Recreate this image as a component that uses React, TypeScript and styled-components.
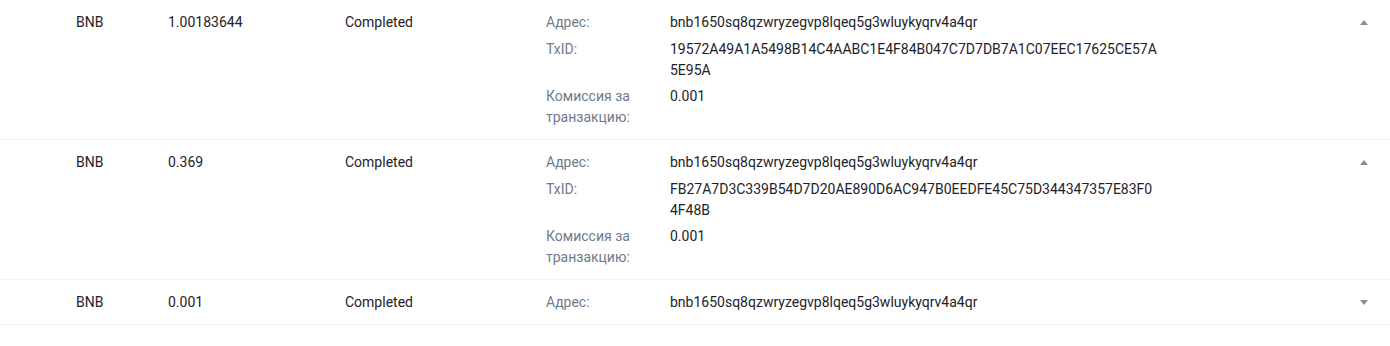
import React from "react";
import styled, { createGlobalStyle } from "styled-components";

const GlobalStyle = createGlobalStyle`
  body {
    margin: 0;
    background: #ffffff;
    font-family: Roboto, "Liberation Sans", Arial, sans-serif;
    font-size: 14px;
    color: #1e2329;
  }
`;

const Table = styled.div`
  display: flex;
  flex-direction: column;
  width: 100%;
`;

const Row = styled.div`
  display: flex;
  align-items: flex-start;
  padding: 12px 0 11px 76px;
  border-bottom: 1px solid #eef0f2;
  line-height: 21px;
`;

const Cell = styled.div<{ $w: number }>`
  flex: 0 0 ${(p) => p.$w}px;
  width: ${(p) => p.$w}px;
`;

const Details = styled.div`
  display: flex;
  flex-direction: column;
  gap: 5.5px;
  flex: 1;
`;

const DetailLine = styled.div`
  display: flex;
`;

const Label = styled.div`
  flex: 0 0 124px;
  width: 124px;
  padding-right: 16px;
  box-sizing: border-box;
  color: #707a8a;
`;

const Value = styled.div`
  width: 487px;
  word-break: break-all;
  color: #1e2329;
`;

const Toggle = styled.div`
  flex: 0 0 52px;
  display: flex;
  justify-content: center;
  padding-top: 8px;
  padding-left: 2px;
`;

const Caret = ({ up }: { up: boolean }) => (
  <svg width="8" height="5" viewBox="0 0 8 5" fill="#848e9c">
    {up ? <path d="M0 5 L4 0 L8 5 Z" /> : <path d="M0 0 L8 0 L4 5 Z" />}
  </svg>
);

type Tx = {
  coin: string;
  amount: string;
  status: string;
  address: string;
  txid?: string;
  fee?: string;
  open: boolean;
};

const rows: Tx[] = [
  {
    coin: "BNB",
    amount: "1.00183644",
    status: "Completed",
    address: "bnb1650sq8qzwryzegvp8lqeq5g3wluykyqrv4a4qr",
    txid: "19572A49A1A5498B14C4AABC1E4F84B047C7D7DB7A1C07EEC17625CE57A5E95A",
    fee: "0.001",
    open: true,
  },
  {
    coin: "BNB",
    amount: "0.369",
    status: "Completed",
    address: "bnb1650sq8qzwryzegvp8lqeq5g3wluykyqrv4a4qr",
    txid: "FB27A7D3C339B54D7D20AE890D6AC947B0EEDFE45C75D344347357E83F04F48B",
    fee: "0.001",
    open: true,
  },
  {
    coin: "BNB",
    amount: "0.001",
    status: "Completed",
    address: "bnb1650sq8qzwryzegvp8lqeq5g3wluykyqrv4a4qr",
    open: false,
  },
];

export default function App() {
  return (
    <>
      <GlobalStyle />
      <Table>
        {rows.map((r, i) => (
          <Row key={i}>
            <Cell $w={92}>{r.coin}</Cell>
            <Cell $w={177}>{r.amount}</Cell>
            <Cell $w={201}>{r.status}</Cell>
            <Details>
              <DetailLine>
                <Label>Адрес:</Label>
                <Value>{r.address}</Value>
              </DetailLine>
              {r.open && (
                <>
                  <DetailLine>
                    <Label>TxID:</Label>
                    <Value>{r.txid}</Value>
                  </DetailLine>
                  <DetailLine>
                    <Label>Комиссия за транзакцию:</Label>
                    <Value>{r.fee}</Value>
                  </DetailLine>
                </>
              )}
            </Details>
            <Toggle>
              <Caret up={r.open} />
            </Toggle>
          </Row>
        ))}
      </Table>
    </>
  );
}
